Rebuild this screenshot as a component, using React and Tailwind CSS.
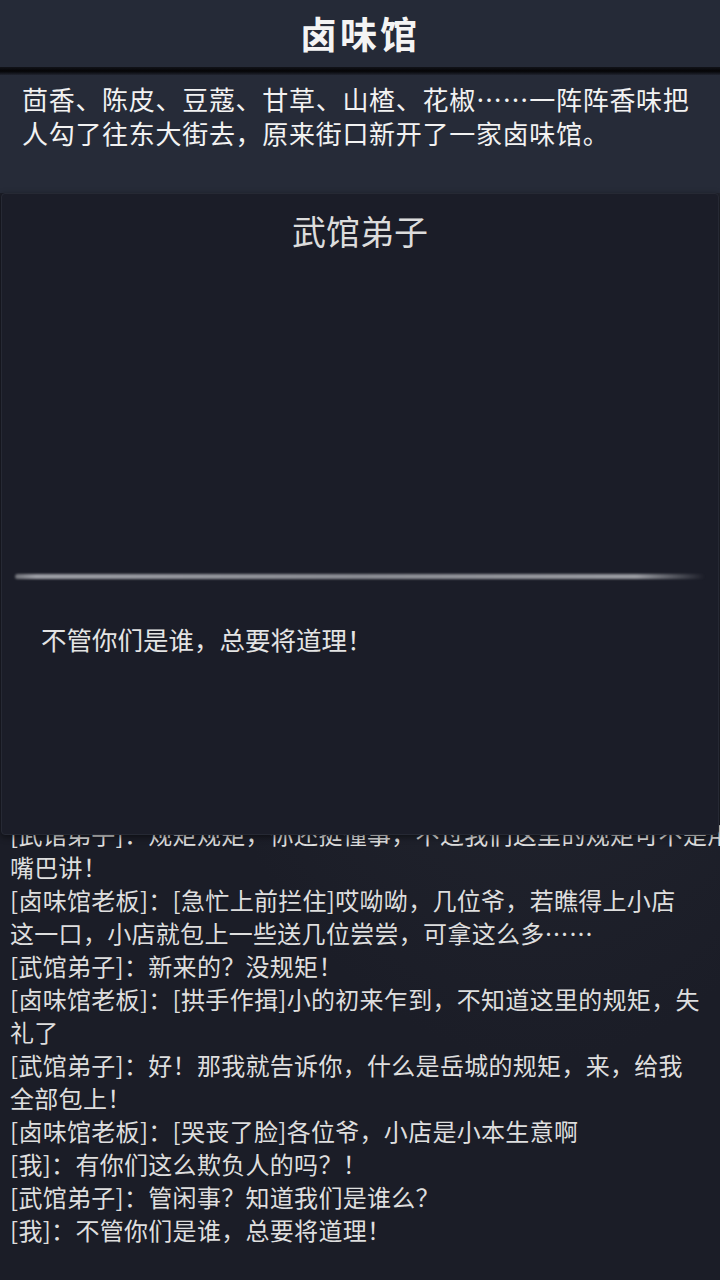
import React from 'react';

const log = [
  ['[武馆弟子]：规矩规矩，你还挺懂事，不过我们这里的规矩可不是用', '嘴巴讲！'],
  ['[卤味馆老板]：[急忙上前拦住]哎呦呦，几位爷，若瞧得上小店', '这一口，小店就包上一些送几位尝尝，可拿这么多……'],
  ['[武馆弟子]：新来的？没规矩！'],
  ['[卤味馆老板]：[拱手作揖]小的初来乍到，不知道这里的规矩，失', '礼了'],
  ['[武馆弟子]：好！那我就告诉你，什么是岳城的规矩，来，给我', '全部包上！'],
  ['[卤味馆老板]：[哭丧了脸]各位爷，小店是小本生意啊'],
  ['[我]：有你们这么欺负人的吗？！'],
  ['[武馆弟子]：管闲事？知道我们是谁么？'],
  ['[我]：不管你们是谁，总要将道理！'],
];

// 对话框（盖在记录上面）
function DialogPanel({ speaker, line }) {
  return (
    <div className="absolute top-[193px] left-[1px] right-[1px] h-[642px] flex flex-col rounded-[4px] border border-[#262934] bg-[#1b1d28] shadow-[0_2px_6px_rgba(0,0,0,0.5)]">
      <div className="pt-[17px] text-center text-[34px] leading-[40px] text-[#dcdcdc]">{speaker}</div>
      <div className="flex-1" />
      <div className="mx-[13px] h-[5px] rounded-full bg-[linear-gradient(to_right,#6f7178,#9c9ea5_3%,#8a8c93_50%,#9a9ca2_90%,transparent)] blur-[0.8px]" />
      <div className="h-[255px] px-[39px] pt-[42px] text-[25.5px] leading-[36px] text-[#e4e4e4]">{line}</div>
    </div>
  );
}

export default function App() {
  return (
    <div
      className="relative w-[720px] h-[1280px] overflow-hidden flex flex-col bg-[#1b1d27] text-white"
      style={{ fontFamily: '"Noto Sans CJK SC", "Noto Sans", sans-serif' }}
    >
      <header className="h-[67px] flex items-center justify-center bg-[#252a37]">
        <h1 className="text-[37px] font-bold tracking-[3px] text-[#f4f4f4]">卤味馆</h1>
      </header>
      <div className="h-[8px] bg-gradient-to-b from-[#121319] via-[#050507] to-[#20242f]" />
      <div className="h-[118px] bg-[#262b38] px-[22px] pt-[7px] text-[26px] tracking-[0.7px] leading-[34px] text-[#f2f2f2] whitespace-nowrap">
        茴香、陈皮、豆蔻、甘草、山楂、花椒……一阵阵香味把<br />
        人勾了往东大街去，原来街口新开了一家卤味馆。
      </div>
      <div className="flex-1 flex flex-col justify-end overflow-hidden px-[10px] pb-[34px] bg-[radial-gradient(ellipse_at_75%_10%,#272a34,transparent_55%)] text-[24px] tracking-[0.3px] leading-[33px] text-[#dedede] whitespace-nowrap">
        {log.map((entry, i) => (
          <p key={i}>
            {entry.map((t, j) => (
              <span key={j} className="block">{t}</span>
            ))}
          </p>
        ))}
      </div>
      <DialogPanel speaker="武馆弟子" line="不管你们是谁，总要将道理！" />
    </div>
  );
}
